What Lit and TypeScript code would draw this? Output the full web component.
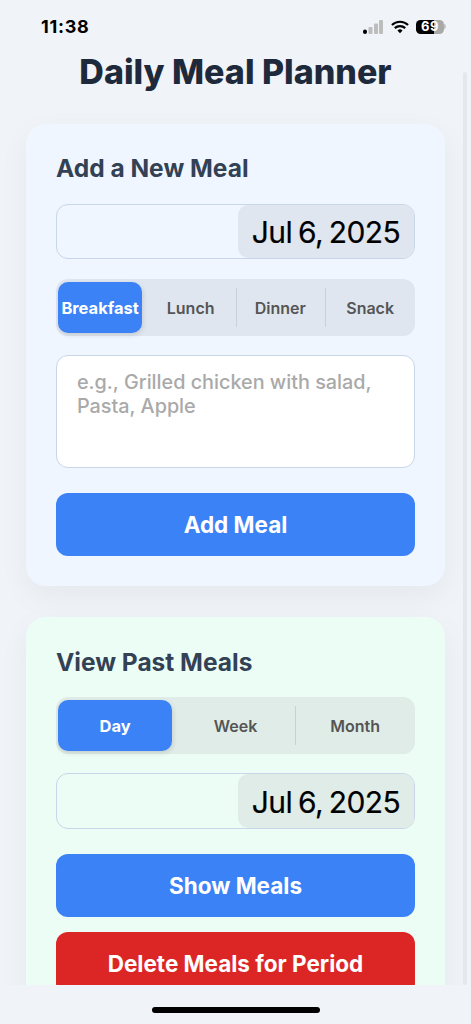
import { LitElement, html, css } from "lit";
import { customElement } from "lit/decorators.js";

@customElement("app-root")
export class AppRoot extends LitElement {
  static styles = css`
    :host { display: block; width: 471px; height: 1024px; overflow: hidden; background: #f0f4f8; font-family: Inter, "Liberation Sans", sans-serif; position: relative; }
    * { box-sizing: border-box; }
    .frame { height: 1024px; display: flex; flex-direction: column; }
    .status { height: 50px; flex: none; display: flex; align-items: center; justify-content: space-between; padding: 3px 25px 0 41px; }
    .time { font-size: 18px; font-weight: 700; color: #000; letter-spacing: 0.7px; }
    .icons { display: flex; align-items: center; }
    .wifi { margin: 0 7px 0 8px; }
    .batt { width: 28px; height: 14px; border-radius: 4.5px; background: linear-gradient(90deg, #000 0 66%, #a9a9a9 66% 100%); color: #fff; font-size: 13px; font-weight: 700; display: flex; align-items: center; justify-content: center; line-height: 1; letter-spacing: 0.5px; }
    .nub { width: 2px; height: 5px; background: #c4c4c4; border-radius: 0 2px 2px 0; }
    .content { flex: 1; min-height: 0; overflow: hidden; padding: 0 26px; }
    h1 { margin: 0 0 30px; font-size: 34px; line-height: 44px; font-weight: 800; text-align: center; color: #1e293b; }
    .card { border-radius: 20px; padding: 30px; box-shadow: 0 10px 30px rgba(0,0,0,0.05); margin-bottom: 31px; display: flex; flex-direction: column; }
    .blue { background: #eff6ff; }
    .green { background: #ecfdf5; }
    h2 { margin: 0 0 21px; font-size: 24.5px; line-height: 29px; font-weight: 700; color: #334155; }
    .green h2 { margin: 1px 0 20px; }
    .date { height: 55px; border: 1.5px solid #c9d5e8; border-radius: 12px; display: flex; justify-content: flex-end; }
    .date span { width: 176px; border-radius: 10px; display: flex; align-items: center; justify-content: center; font-size: 30px; letter-spacing: -0.6px; word-spacing: -2px; color: #000; padding-top: 1px; -webkit-text-stroke: 0.2px #000; }
    .blue .date span { background: #e0e6ef; }
    .green .date span { background: #dfece7; }
    .seg { height: 57px; border-radius: 12px; display: flex; align-items: stretch; margin: 20px 0 19px; }
    .blue .seg { background: #e0e6ef; }
    .green .seg { background: #dfece7; margin: 0 0 19px; }
    .opt { position: relative; flex: 1 1 0; min-width: 0; display: flex; align-items: center; justify-content: center; font-size: 16px; font-weight: 600; color: #555; }
    .opt.sep::before { content: ""; position: absolute; left: 0; top: 9px; bottom: 9px; width: 1px; background: #c9d0d8; }
    .pill { flex: 1; align-self: stretch; margin: 3px 3.5px 3px 2px; display: flex; align-items: center; justify-content: center; background: #3b82f6; color: #fff; border-radius: 10px; font-weight: 700; font-size: 16.5px; white-space: nowrap; box-shadow: 1px 2px 5px rgba(0,0,0,0.12); }
    textarea { display: block; width: 100%; height: 113px; border: 1.5px solid #c9d5e8; border-radius: 12px; background: #fff; padding: 14px 20px; font: 500 19.8px/24px Inter, "Liberation Sans", sans-serif; resize: none; margin: 0 0 25px; outline: none; }
    textarea::placeholder { color: #a9a9a9; opacity: 1; }
    .btn { height: 63px; border-radius: 12px; display: flex; align-items: center; justify-content: center; color: #fff; font-size: 22.5px; font-weight: 700; }
    .primary { background: #3b82f6; }
    .green .date { margin-bottom: 25px; height: 56px; }
    .danger { background: #dc2626; margin-top: 15px; }
    .bottom { height: 39px; flex: none; background: #f0f4f8; display: flex; justify-content: center; position: relative; z-index: 1; }
    .home { width: 168px; height: 6px; border-radius: 3px; background: #000; margin-top: 22px; }
    .track { position: absolute; left: 463px; top: 72px; width: 4px; height: 913px; background: #e4e8ec; border-radius: 2px; }
  `;

  render() {
    return html`
      <div class="frame">
        <div class="status">
          <span class="time">11:38</span>
          <div class="icons">
            <svg width="20" height="14" viewBox="0 0 20 14"><rect x="0" y="9.5" width="4" height="4.5" rx="2" fill="#000"/><rect x="5.5" y="7" width="4" height="7" rx="1" fill="#bdbdbd"/><rect x="11" y="3.5" width="4" height="10.5" rx="1" fill="#bdbdbd"/><rect x="16" y="0" width="4" height="14" rx="1" fill="#bdbdbd"/></svg>
            <svg class="wifi" width="18" height="14" viewBox="0 0 19 14" fill="none" stroke="#000" stroke-width="2.3"><path d="M1 5a12 12 0 0 1 17 0"/><path d="M4 8.2a8 8 0 0 1 11 0"/><path d="M9.5 13.5 6.8 10.8a3.8 3.8 0 0 1 5.4 0z" fill="#000" stroke="none"/></svg>
            <div class="batt">69</div><div class="nub"></div>
          </div>
        </div>
        <div class="content">
          <h1>Daily Meal Planner</h1>
          <section class="card blue">
            <h2>Add a New Meal</h2>
            <div class="date"><span>Jul 6, 2025</span></div>
            <div class="seg">
              <div class="opt"><div class="pill">Breakfast</div></div>
              <div class="opt">Lunch</div>
              <div class="opt sep">Dinner</div>
              <div class="opt sep">Snack</div>
            </div>
            <textarea placeholder="e.g., Grilled chicken with salad, Pasta, Apple"></textarea>
            <div class="btn primary">Add Meal</div>
          </section>
          <section class="card green">
            <h2>View Past Meals</h2>
            <div class="seg">
              <div class="opt"><div class="pill">Day</div></div>
              <div class="opt">Week</div>
              <div class="opt sep">Month</div>
            </div>
            <div class="date"><span>Jul 6, 2025</span></div>
            <div class="btn primary">Show Meals</div>
            <div class="btn danger">Delete Meals for Period</div>
          </section>
        </div>
        <div class="bottom"><div class="home"></div></div>
      </div>
      <div class="track"></div>
    `;
  }
}
